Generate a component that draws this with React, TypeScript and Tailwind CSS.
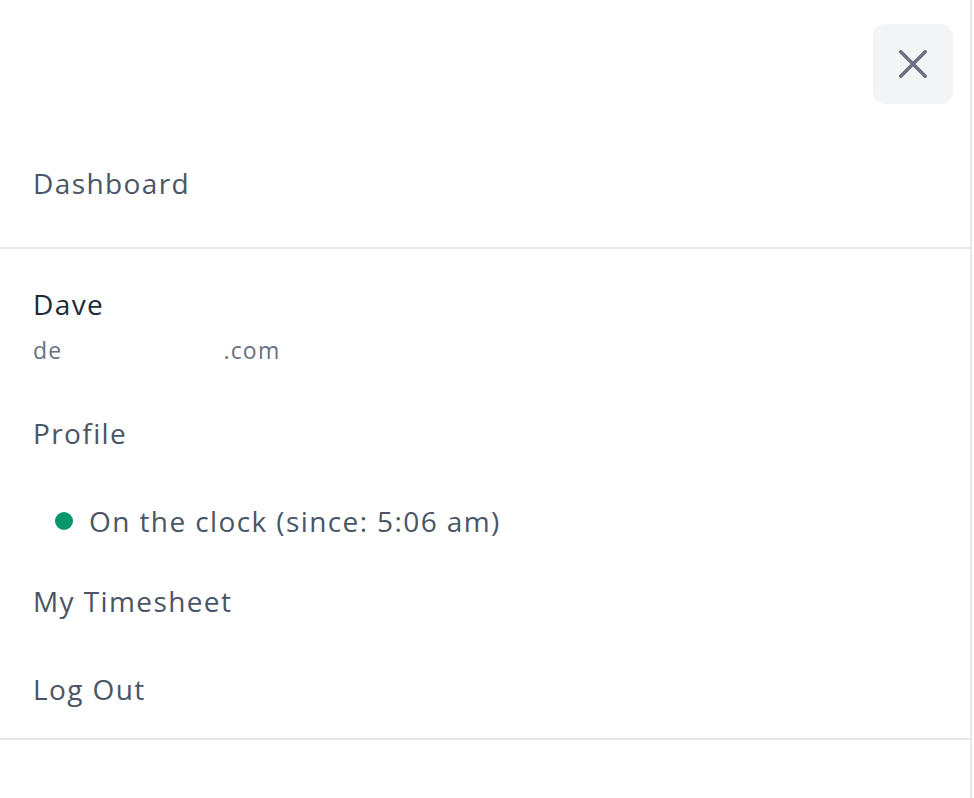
export default function App() {
  return (
    <div
      className="w-[974px] h-[798px] bg-white flex overflow-hidden"
      style={{ fontFamily: "'Open Sans', 'Noto Sans', sans-serif" }}
    >
      <div className="w-[972px] border-r-2 border-[#e8e8e8] flex flex-col">
        <div className="flex justify-end pt-6 pr-[17px]">
          <button className="w-20 h-20 rounded-xl bg-gray-100 flex items-center justify-center text-gray-500">
            <svg width="28" height="28" viewBox="0 0 28 28" fill="none" stroke="currentColor" strokeWidth="3.5" strokeLinecap="round">
              <path d="M1.75 1.75L26.25 26.25M26.25 1.75L1.75 26.25" />
            </svg>
          </button>
        </div>

        <div className="pt-[59px] pb-[44px] px-[33px] border-b-2 border-[#e5e7eb]">
          <a className="block text-[28px] leading-[40px] tracking-[1.4px] text-gray-600">Dashboard</a>
        </div>

        <div className="pt-[35px] pb-[29px] px-[33px] border-b-2 border-[#e8e8e8] text-[28px] leading-[40px] tracking-[1.4px] text-gray-600">
          <div className="text-gray-800">Dave</div>
          <div className="mt-[10px] flex text-[23px] leading-[32px] tracking-[1.2px] text-gray-500">
            <span>de</span>
            <span className="w-[161px]" />
            <span>.com</span>
          </div>

          <a className="block mt-[47px]">Profile</a>

          <div className="mt-[48px] flex items-center pl-[22px]">
            <span className="w-[18px] h-[18px] rounded-full bg-[#059669] mr-4" />
            <span>On the clock (since: 5:06 am)</span>
          </div>

          <a className="block mt-[40px]">My Timesheet</a>
          <a className="block mt-[48px]">Log Out</a>
        </div>
      </div>
    </div>
  );
}
